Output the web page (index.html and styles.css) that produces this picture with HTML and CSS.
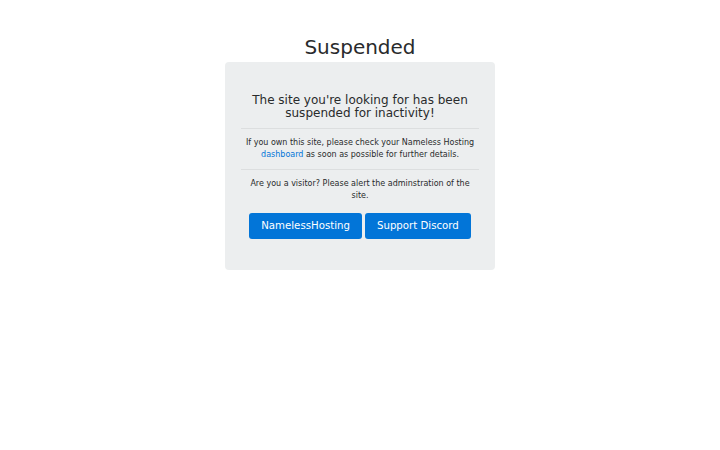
FILE: index.html
```html
<!DOCTYPE html>
<html>
<head>
<meta charset="utf-8">
<title>Suspended</title>
<link rel="stylesheet" href="styles.css">
</head>
<body>
<div class="wrap">
  <h1 class="title">Suspended</h1>
  <div class="jumbo">
    <h2 class="lead">The site you're looking for has been suspended for inactivity!</h2>
    <hr class="rule rule-a">
    <p class="text">If you own this site, please check your Nameless Hosting <a href="#" class="link">dashboard</a> as soon as possible for further details.</p>
    <hr class="rule rule-b">
    <p class="text">Are you a visitor? Please alert the adminstration of the site.</p>
    <div class="actions">
      <a href="#" class="btn">NamelessHosting</a>
      <a href="#" class="btn">Support Discord</a>
    </div>
  </div>
</div>
</body>
</html>
```
FILE: styles.css
```css
html, body {
  margin: 0;
  padding: 0;
  background: #fff;
  font-family: "DejaVu Sans", sans-serif;
  color: #292b2c;
}
.wrap {
  width: 270px;
  margin: 0 auto;
  padding-top: 34px;
  text-align: center;
}
.title {
  margin: 0 0 2px;
  font-size: 20px;
  font-weight: 400;
  line-height: 26px;
}
.jumbo {
  background: #eceeef;
  border-radius: 4px;
  padding: 32px 16px 31px;
}
.lead {
  margin: 0;
  font-size: 12px;
  font-weight: 400;
  line-height: 13px;
}
.rule {
  border: 0;
  border-top: 1px solid #dcdedf;
}
.rule-a {
  margin: 8px 0 8px;
}
.rule-b {
  margin: 8px 0 8px;
}
.text {
  margin: 0;
  font-size: 8px;
  line-height: 12px;
}
.link {
  color: #0275d8;
  text-decoration: none;
}
.actions {
  display: flex;
  justify-content: center;
  gap: 3px;
  margin-top: 11px;
}
.btn {
  display: inline-block;
  background: #0275d8;
  color: #fff;
  text-decoration: none;
  font-size: 10.2px;
  line-height: 16px;
  padding: 5px 12px 5px;
  border-radius: 3px;
}
```
